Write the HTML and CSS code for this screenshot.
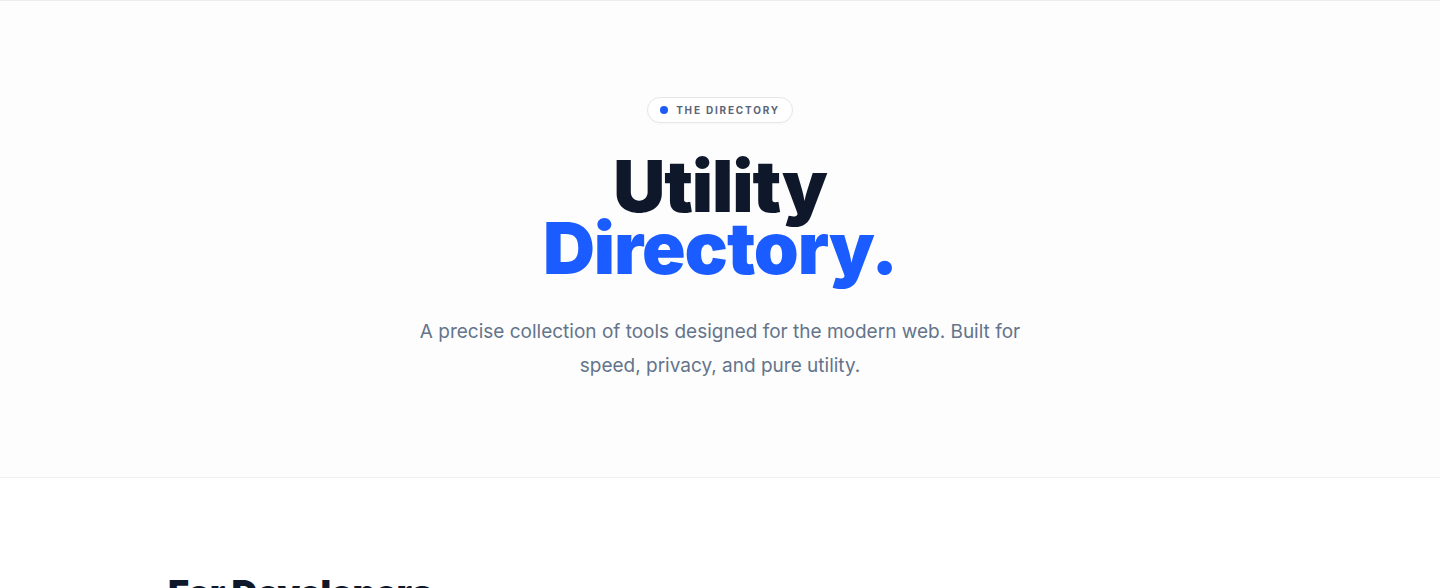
FILE: index.html
```html
<!DOCTYPE html>
<html lang="en">
<head>
<meta charset="utf-8">
<title>Utility Directory</title>
<link rel="stylesheet" href="styles.css">
</head>
<body>
<header class="hero">
  <div class="badge"><span class="badge-dot"></span>THE DIRECTORY</div>
  <h1 class="title"><span class="title-dark">Utility</span><span class="title-blue">Directory.</span></h1>
  <p class="lead">A precise collection of tools designed for the modern web. Built for speed, privacy, and pure utility.</p>
</header>
<main class="content">
  <section class="category">
    <h2 class="category-title">For Developers</h2>
  </section>
</main>
</body>
</html>
```
FILE: styles.css
```css
* { box-sizing: border-box; }
html, body { margin: 0; padding: 0; }
body {
  font-family: Inter, "Noto Sans", sans-serif;
  background: #ffffff;
  color: #0f172a;
  border-top: 1px solid #ececee;
}
.hero {
  background: #fdfdfd;
  border-bottom: 1px solid #efeff1;
  display: flex;
  flex-direction: column;
  align-items: center;
  padding: 96px 24px 94px;
  text-align: center;
}
.badge {
  display: inline-flex;
  align-items: center;
  gap: 8px;
  height: 26px;
  padding: 0 12px 0 12px;
  border: 1px solid #e5e7eb;
  border-radius: 999px;
  background: #ffffff;
  font-size: 10px;
  font-weight: 700;
  letter-spacing: 0.18em;
  color: #5b6478;
  box-shadow: 0 1px 2px rgba(15, 23, 42, 0.03);
}
.badge-dot {
  width: 8px;
  height: 8px;
  border-radius: 50%;
  background: #1d5cf5;
}
.title {
  margin: 32px 0 0;
  font-size: 72px;
  line-height: 62px;
  font-weight: 900;
  letter-spacing: -0.015em;
  display: flex;
  flex-direction: column;
  align-items: center;
}
.title-dark { color: #0f172a; }
.title-blue { color: #1a5cff; }
.lead {
  margin: 36px 0 0;
  max-width: 640px;
  font-size: 19px;
  line-height: 34px;
  color: #64748b;
}
.content {
  max-width: 1152px;
  margin: 0 auto;
  padding: 96px 24px;
}
.category-title {
  margin: 0;
  font-size: 36px;
  font-weight: 900;
  letter-spacing: -0.015em;
  line-height: 1.1;
  color: #0f172a;
}
```
